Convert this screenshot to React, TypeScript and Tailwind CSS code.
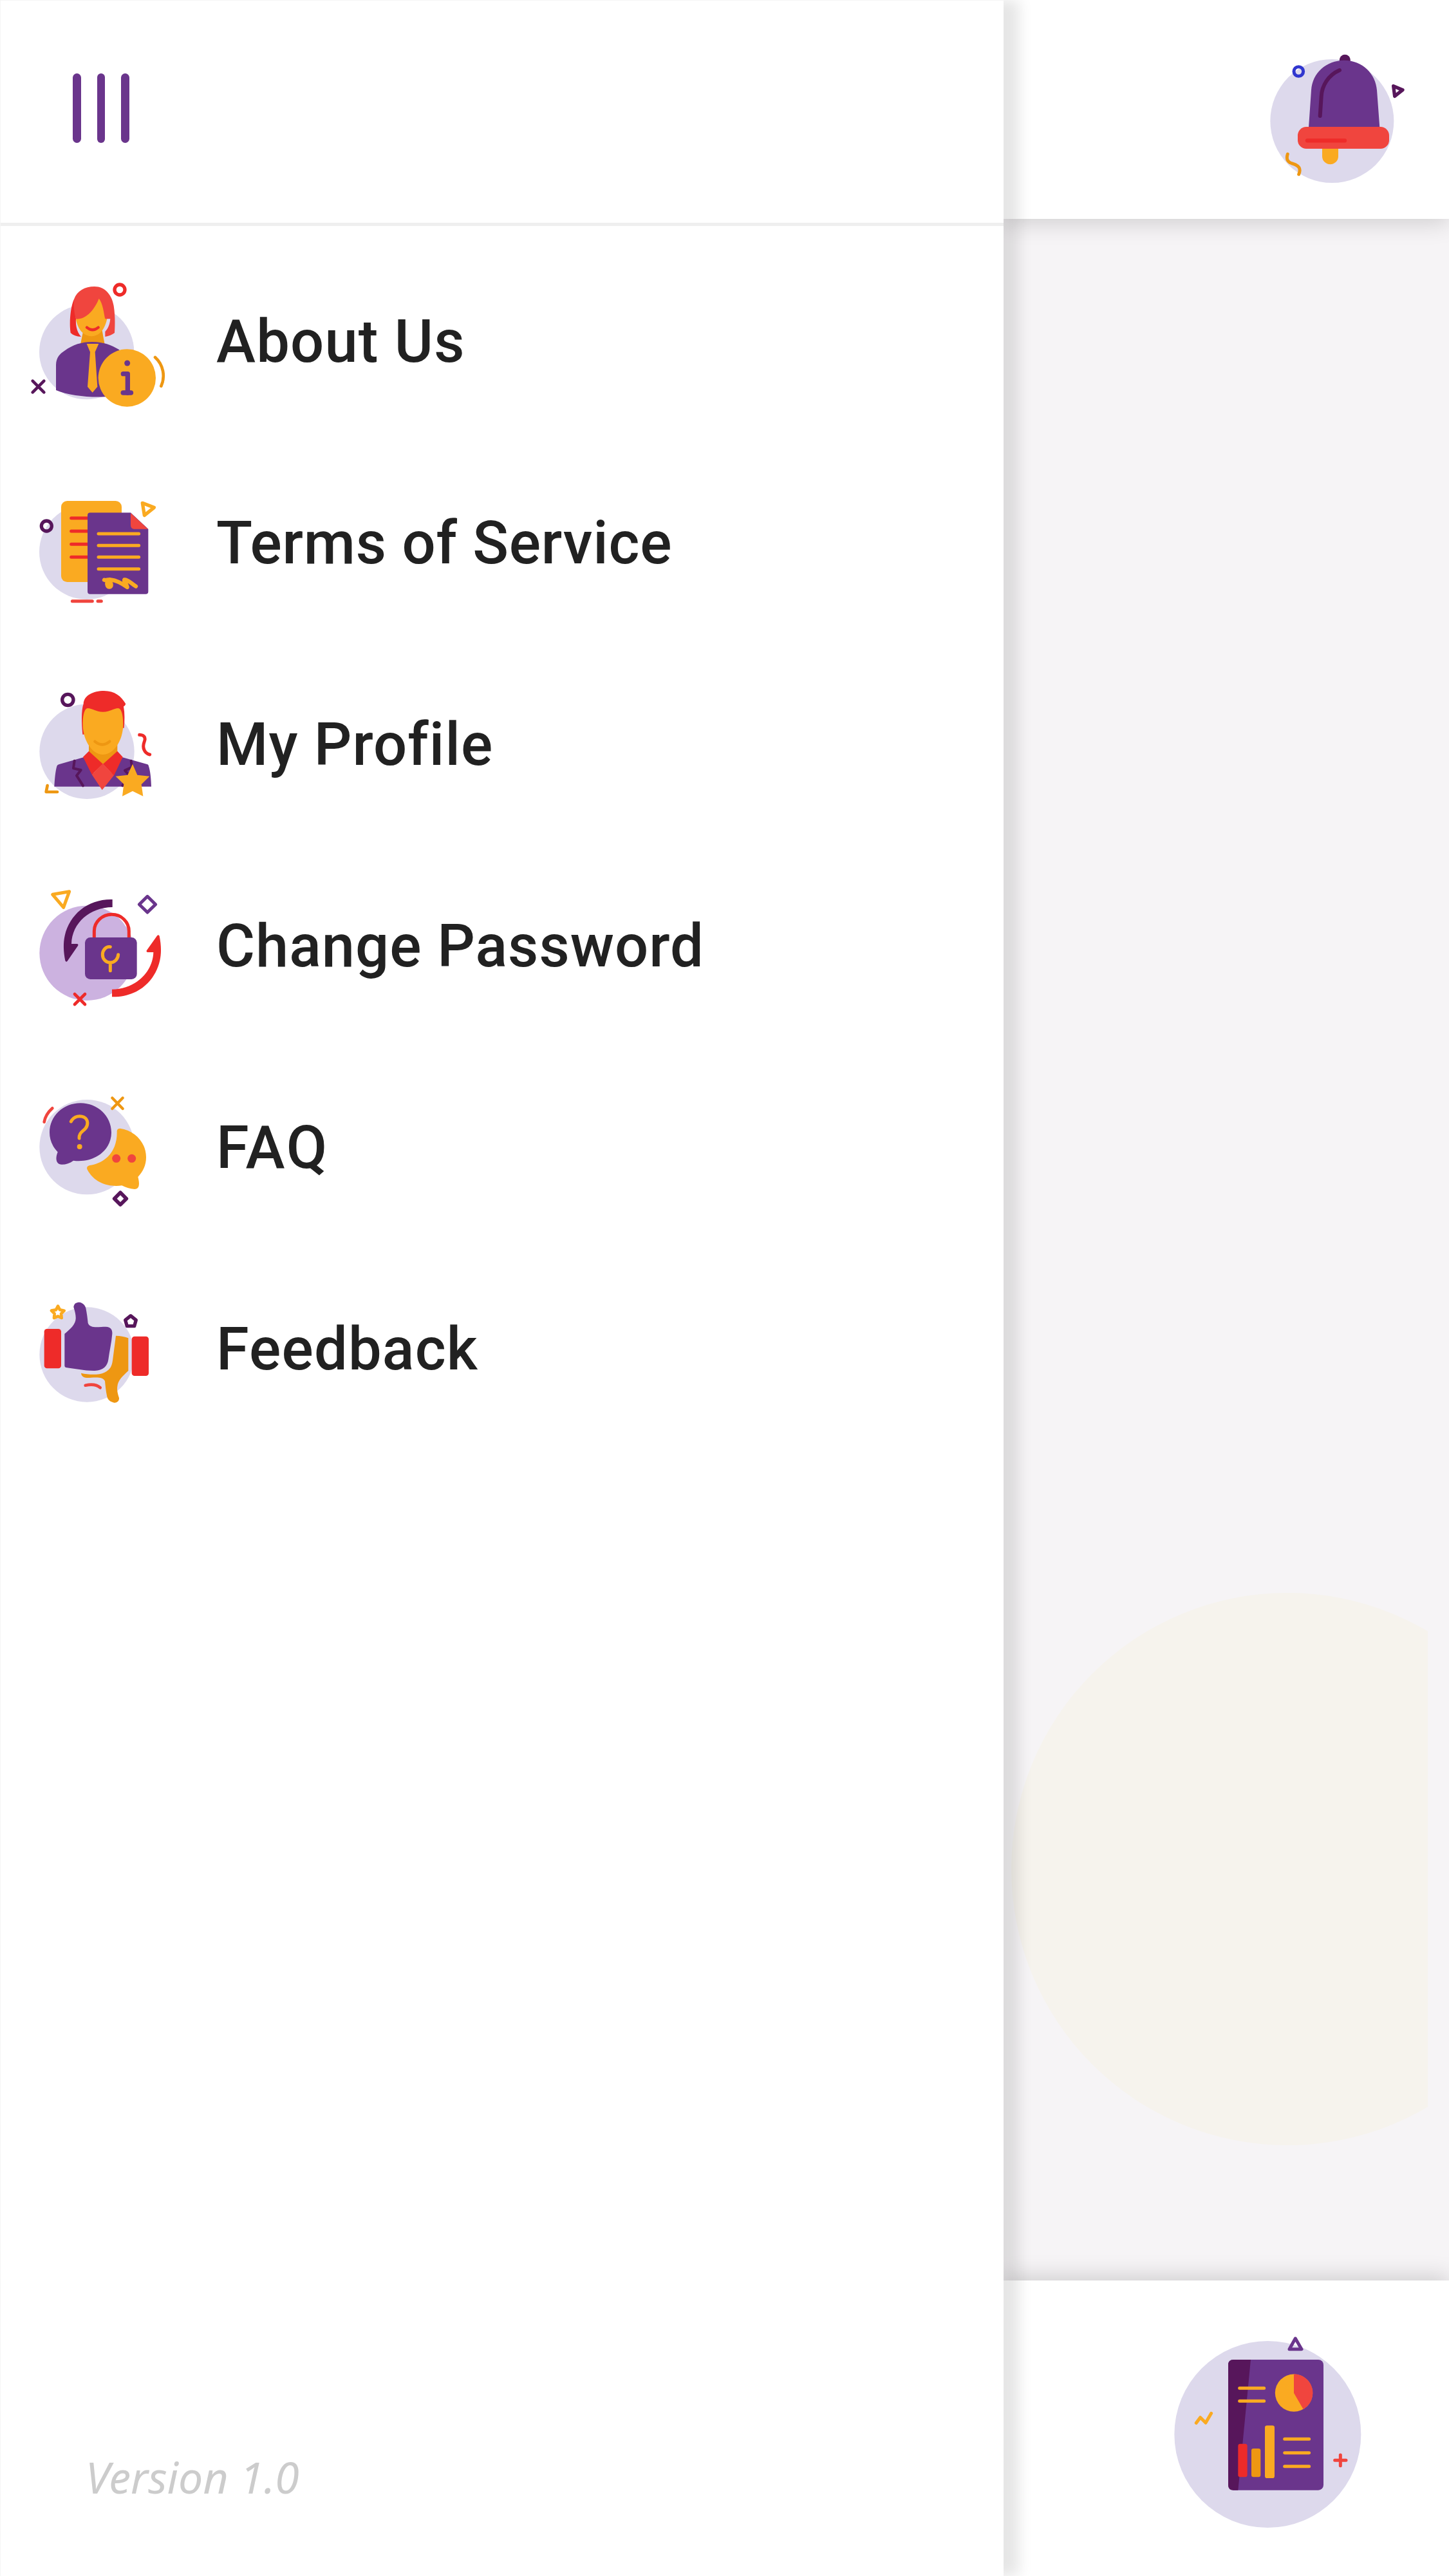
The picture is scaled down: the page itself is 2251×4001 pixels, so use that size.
import React from "react";

const PURPLE = "#6a358c";
const PLUM = "#57165b";
const ORANGE = "#faaa21";
const AMBER = "#ee9712";
const RED = "#ee2b29";
const CORAL = "#f0453e";
const LAVENDER = "#ddd9ec";

type ArtProps = { viewBox: string; className?: string; children: React.ReactNode };

function Art({ viewBox, className, children }: ArtProps) {
  return (
    <svg viewBox={viewBox} className={className} fill="none" strokeLinecap="round" strokeLinejoin="round" aria-hidden="true">
      {children}
    </svg>
  );
}

const rowArt = "h-[313px] w-[250px] shrink-0";

function AboutIcon() {
  return (
    <Art viewBox="0 -138 750 939" className={rowArt}>
      <circle cx="314" cy="380" r="221" fill={LAVENDER} />
      <path d="M298 280H386L398 345H285Z" fill={AMBER} />
      <path d="M264 228C270 262 290 306 338 307C384 304 402 258 409 226L385 120H300Z" fill={ORANGE} />
      <path d="M255 134C238 170 232 245 239 291C250 302 267 308 288 309C270 290 262 262 264 226Z" fill={RED} />
      <path d="M264 226C256 200 252 170 255 134C270 95 305 75 350 75C400 75 432 115 440 165C447 210 446 250 444 291C432 300 418 306 400 309V285C416 268 422 250 424 226H400C394 200 390 155 371 131C352 180 312 230 264 226Z" fill={CORAL} />
      <path d="M315 266Q341 288 368 266" stroke={RED} strokeWidth="13" />
      <path d="M171 558V440C172 405 190 388 210 375C250 346 290 333 340 333C395 334 425 346 466 370L480 570C440 600 260 596 171 558Z" fill={PURPLE} />
      <path d="M314 342H370L353 380L364 542L341 569L318 542L330 380Z" fill={ORANGE} />
      <circle cx="502" cy="501" r="134" fill={ORANGE} />
      <circle cx="503" cy="432" r="13.500" fill={PURPLE} />
      <path d="M484 482H505V570" stroke={PURPLE} strokeWidth="22" />
      <path d="M484 570H520" stroke={PURPLE} strokeWidth="23" />
      <path d="M633 405C672 440 681 495 661 539" stroke={AMBER} strokeWidth="14" />
      <circle cx="468" cy="90" r="24" stroke={RED} strokeWidth="16" />
      <path d="M62 515L115 568M115 515L62 568" stroke={PLUM} strokeWidth="14" />
    </Art>
  );
}

function TermsIcon() {
  return (
    <Art viewBox="0 -189 750 939" className={rowArt}>
      <circle cx="314" cy="322" r="221" fill={LAVENDER} />
      <rect x="195" y="84" width="282" height="378" rx="28" fill={ORANGE} />
      <path d="M242 164H318M242 225H318M242 286H318M242 346H318" stroke={RED} strokeWidth="15" />
      <path d="M330 139H519L601 215V506Q601 518 589 518H330Q318 518 318 506V151Q318 139 330 139Z" fill={PURPLE} />
      <path d="M519 140L600 215H535Q519 215 519 196Z" fill={CORAL} />
      <path d="M369 237H557M369 292H557M369 346H557M369 401H557" stroke={ORANGE} strokeWidth="15" />
      <path d="M396 452C405 456 412 449 426 451C460 455 484 472 503 486C501 470 484 458 490 451C505 449 520 468 543 482" stroke={ORANGE} strokeWidth="19" />
      <path d="M409 458C405 476 411 487 420 486C432 484 432 468 420 460Z" fill={ORANGE} stroke={ORANGE} strokeWidth="17" />
      <circle cx="127" cy="201" r="24" stroke={PLUM} strokeWidth="16" />
      <path d="M574 94L628 115L583 151Z" stroke={ORANGE} strokeWidth="16" />
      <path d="M247 551H340M366 551H382" stroke={CORAL} strokeWidth="15" />
    </Art>
  );
}

function ProfileIcon() {
  return (
    <Art viewBox="0 -150 750 939" className={rowArt}>
      <circle cx="315" cy="352" r="221" fill={LAVENDER} />
      <path d="M324 320H457V360L390 412L324 360Z" fill={AMBER} />
      <path d="M300 272H295C290 225 288 160 299 130C300 90 345 69 395 69C445 69 475 95 495 128Q497 134 486 142C492 175 491 210 488 242H482Z" fill={RED} />
      <path d="M296 225C296 185 303 150 319 150C340 150 355 167 390 167C425 167 440 150 460 150C477 150 484 185 484 225C484 300 440 366 390 366C340 366 296 300 296 225Z" fill={ORANGE} />
      <path d="M352 305Q387 334 421 305" stroke={AMBER} strokeWidth="13" />
      <path d="M163 515C165 480 168 445 175 420Q177 414 184 412L299 379L387 515L481 379L598 412Q602 414 603 420C611 445 614 480 615 515Z" fill={PURPLE} />
      <path d="M257 395L252 430L287 438L267 464L297 511M521 395L525 425L492 440L510 460L481 511" stroke={PLUM} strokeWidth="12" />
      <path d="M324 350L390 410L338 459L297 377ZM457 350L390 410L441 464L482 377Z" fill={RED} />
      <path d="M389 408L441 463L386 531L338 459Z" fill={CORAL} />
      <path d="M528 410L550 461L607 467L569 505L577 560L528 536L480 560L487 504L449 467L505 461Z" fill={ORANGE} />
      <circle cx="226" cy="111" r="26" stroke={PLUM} strokeWidth="16" />
      <path d="M560 274C584 275 590 288 582 308C572 334 583 360 608 366" stroke={RED} strokeWidth="15" />
      <path d="M131 510L125 540H177" stroke={AMBER} strokeWidth="14" />
    </Art>
  );
}

function PasswordIcon() {
  return (
    <Art viewBox="0 -141 750 939" className={rowArt}>
      <circle cx="315" cy="361" r="221" fill="#ccb2e0" />
      <path d="M434 111V147C330 148 245 220 243 318H270Q277 321 273 327L224 398Q218 405 214 396C206 355 204 315 212 280C235 180 320 108 434 111Z" fill={PLUM} />
      <path d="M432 530C535 530 622 455 625 357H597Q590 354 594 348L643 279Q650 273 653 281C661 320 663 360 655 395C632 495 550 567 432 565Z" fill={RED} />
      <path d="M464 188L498 240L490 205Z" fill="#ffffff" />
      <path d="M349 295V258C349 216 386 181 431 181C476 181 511 216 511 258V295" stroke={RED} strokeWidth="15" />
      <rect x="306" y="288" width="242" height="195" rx="25" fill={PURPLE} />
      <path d="M424 332C403 329 388 348 388 368C388 389 404 405 424 405C444 405 460 389 461 368M424 405V443" stroke={ORANGE} strokeWidth="15" />
      <path d="M155 88L233 74L206 148Z" stroke={ORANGE} strokeWidth="15" />
      <path d="M597 97L635 134L597 171L559 134Z" stroke={PURPLE} strokeWidth="15" />
      <path d="M258 552L306 600M306 552L258 600" stroke={RED} strokeWidth="14" />
    </Art>
  );
}

function FaqIcon() {
  return (
    <Art viewBox="0 -162 750 939" className={rowArt}>
      <circle cx="315" cy="305" r="221" fill={LAVENDER} />
      <path d="M455 230Q456 218 470 218C540 228 591 285 591 352C591 390 576 420 553 444C560 470 563 500 537 501C515 500 495 493 478 484C420 492 350 475 316 408Q312 394 328 390C400 380 458 325 455 230Z" fill={ORANGE} />
      <path d="M285 100C365 100 429 160 429 237C429 320 350 380 252 368C235 380 218 386 198 386C172 386 166 360 179 328C152 300 141 268 141 237C141 160 205 100 285 100Z" fill={PURPLE} />
      <path d="M241 186C255 159 284 157 302 166C322 177 321 202 309 217C295 234 278 238 279 264" stroke={ORANGE} strokeWidth="15" />
      <circle cx="281" cy="303" r="12" fill={ORANGE} />
      <circle cx="452" cy="358" r="19.500" fill={CORAL} />
      <circle cx="524" cy="358" r="19.500" fill={CORAL} />
      <path d="M116 188C120 164 134 142 154 124" stroke={CORAL} strokeWidth="14" />
      <path d="M433 76L482 126M482 76L433 126" stroke={AMBER} strokeWidth="13" />
      <path d="M471 517L499 545L471 573L443 545Z" stroke={PLUM} strokeWidth="17" />
    </Art>
  );
}

function FeedbackIcon() {
  return (
    <Art viewBox="0 -183 750 939" className={rowArt}>
      <circle cx="315" cy="312" r="221" fill={LAVENDER} />
      <rect x="116" y="192" width="79" height="184" rx="13" fill={RED} />
      <rect x="524" y="227" width="79" height="184" rx="13" fill={RED} />
      <path d="M450 224C470 224 490 228 508 235V387C482 412 460 430 457 460C454 480 460 498 465 514C466 530 454 537 442 536C424 533 412 522 409 508C403 480 401 455 399 435C390 415 360 418 335 419C310 421 290 420 288 398C325 406 370 408 397 395C425 382 431 365 435 340Z" fill={AMBER} />
      <path d="M211 215C240 192 262 170 263 145C264 125 258 108 253 90C255 72 268 67 282 68C296 71 307 82 310 95C315 120 318 145 320 165C330 192 370 182 403 182C430 183 434 200 433 215C430 255 420 295 415 335C411 365 390 385 352 387C305 388 260 377 217 372Q211 371 211 364Z" fill={PURPLE} />
      <path d="M308 455Q354 445 377 466" stroke={CORAL} strokeWidth="14" />
      <path d="M180 86L189 103L209 107L195 121L197 141L180 133L162 141L164 121L150 107L171 103Z" stroke={ORANGE} strokeWidth="14" />
      <path d="M519 131L544 151L536 179H502L494 151Z" stroke={PLUM} strokeWidth="16" />
    </Art>
  );
}

function BellIcon() {
  return (
    <Art viewBox="0 0 780 720" className="h-[240px] w-[260px] shrink-0">
      <circle cx="388" cy="384" r="288" fill={LAVENDER} />
      <circle cx="448" cy="100" r="25.500" fill={PLUM} />
      <path d="M279 415L291 240C296 160 360 101 445 101C530 101 592 165 597 240L610 415Z" fill={PURPLE} />
      <path d="M423 147C370 170 340 220 338 270L332 360" stroke={PLUM} strokeWidth="18" />
      <path d="M342 505H417V548A37.500 37.500 0 0 1 342 548Z" fill={ORANGE} />
      <rect x="228" y="411" width="426" height="102" rx="40" fill={CORAL} />
      <path d="M273 475H447" stroke={RED} strokeWidth="19" />
      <circle cx="232" cy="153" r="22" stroke="#3036cf" strokeWidth="15" />
      <path d="M674 221L717 239L680 268Z" stroke={PLUM} strokeWidth="16" />
      <path d="M181 538C173 562 181 575 203 582C232 590 245 605 233 632" stroke={AMBER} strokeWidth="15" />
    </Art>
  );
}

function ReportIcon() {
  return (
    <Art viewBox="0 0 1020 1050" className="h-[350px] w-[340px] shrink-0">
      <circle cx="508" cy="543" r="435" fill={LAVENDER} />
      <rect x="324" y="195" width="444" height="608" rx="24" fill={PURPLE} />
      <path d="M429 195H348Q324 195 324 219V779Q324 803 348 803H370Z" fill={PLUM} />
      <path d="M377 328H491M377 388H491M587 565H701M587 629H701M587 692H701" stroke={ORANGE} strokeWidth="15" />
      <circle cx="630" cy="350" r="87.500" fill={ORANGE} />
      <path d="M630 350V262.500A87.500 87.500 0 0 1 674 426Z" fill={CORAL} />
      <rect x="370" y="587" width="43" height="155" rx="10" fill={RED} />
      <rect x="432" y="609" width="43" height="133" rx="10" fill={AMBER} />
      <rect x="495" y="502" width="45" height="245" rx="10" fill={ORANGE} />
      <path d="M637 96L666 146H609Z" stroke={PURPLE} strokeWidth="15" />
      <path d="M175 490L194 464L219 489L245 445" stroke={ORANGE} strokeWidth="15" />
      <path d="M847 639V689M821 664H873" stroke={CORAL} strokeWidth="15" />
    </Art>
  );
}

const menu = [
  { label: "About Us", Icon: AboutIcon, tracking: "tracking-[1.2px]" },
  { label: "Terms of Service", Icon: TermsIcon, tracking: "tracking-[0.75px]" },
  { label: "My Profile", Icon: ProfileIcon, tracking: "tracking-[1.1px]" },
  { label: "Change Password", Icon: PasswordIcon, tracking: "tracking-[1px]" },
  { label: "FAQ", Icon: FaqIcon, tracking: "tracking-[2.9px]" },
  { label: "Feedback", Icon: FeedbackIcon, tracking: "tracking-[1.2px]" },
];

export default function App() {
  return (
    <div className="flex h-[4001px] w-[2251px] overflow-hidden bg-white font-['Roboto',sans-serif]">
      <aside className="relative z-10 flex w-[1559px] shrink-0 flex-col border-t border-l border-[#f5f5f5] bg-white shadow-[24px_0_20px_rgba(0,0,0,0.1)]">
        <header className="flex h-[350px] shrink-0 border-b-[5px] border-[#efefef] pt-[113px] pl-[112px]">
          <button aria-label="Close menu" className="flex h-[108px] gap-[25px]">
            <span className="h-full w-[12.5px] rounded-full bg-[#6a358c]" />
            <span className="h-full w-[12.5px] rounded-full bg-[#6a358c]" />
            <span className="h-full w-[12.5px] rounded-full bg-[#6a358c]" />
          </button>
        </header>
        <nav className="flex flex-col pt-[23px] pl-[29px]">
          {menu.map(({ label, Icon, tracking }) => (
            <a key={label} className="flex h-[313px] items-center">
              <Icon />
              <span className={`ml-[56px] text-[92px] leading-none font-medium whitespace-nowrap text-[#212121] ${tracking}`}>
                {label}
              </span>
            </a>
          ))}
        </nav>
        <p className="mt-auto mb-[102px] pl-[132px] font-['Noto_Sans',sans-serif] text-[68px] leading-[104px] text-[#cccccc] italic">
          Version 1.0
        </p>
      </aside>

      <main className="flex min-w-0 flex-1 flex-col bg-[#f6f4f6]">
        <header className="flex h-[340px] shrink-0 justify-end bg-white pt-[60px] pr-[51px] shadow-[0_6px_34px_rgba(0,0,0,0.16)]">
          <BellIcon />
        </header>
        <section className="flex-1 pt-[2134px] pl-[12px]">
          <div className="h-[858px] w-[647px] overflow-hidden">
            <div className="h-[858px] w-[858px] rounded-full bg-[#f6f3ed]" />
          </div>
        </section>
        <footer className="flex h-[459px] shrink-0 justify-end bg-white pt-[58px] pr-[111px] shadow-[0_-4px_34px_rgba(0,0,0,0.18)]">
          <ReportIcon />
        </footer>
      </main>
    </div>
  );
}
